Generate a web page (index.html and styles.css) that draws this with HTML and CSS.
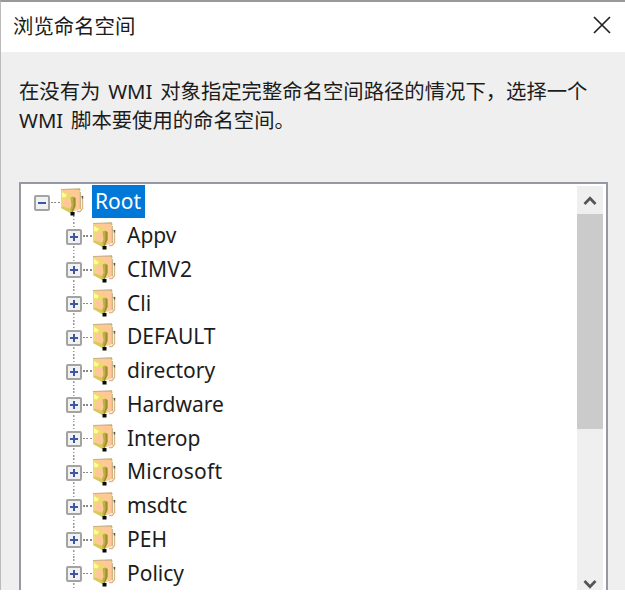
FILE: index.html
```
<!DOCTYPE html>
<html lang="zh-CN">
<head>
<meta charset="utf-8">
<title>浏览命名空间</title>
<link rel="stylesheet" href="styles.css">
</head>
<body>
<svg class="defs" width="0" height="0" aria-hidden="true">
  <symbol id="folder" viewBox="0 0 24 28">
    <path d="M20 8.500h2.500v12l-2.500 3h-3" fill="#fff" stroke="#e0b583" stroke-width="1.400"/>
    <path d="M22.500 8v2.500" stroke="#555" stroke-width="1.300"/>
    <path d="M1 1.500 20 .8 20.500 21 12 24 1 20Z" fill="#ffc996"/>
    <path d="M1 1.500 19.500 .8 20 3M20.300 4v17" fill="none" stroke="#c5b183" stroke-width="1.200"/>
    <path d="M1 2 13 8.500 11 10 4 10.500 1 12Z" fill="#e9df62"/>
    <path d="M2 4 7 7 5 9.500 2 9Z" fill="#fffa9c"/>
    <path d="M1 12 4 10 3 16 1 20Z" fill="#f0dc74"/>
    <path d="M10.500 9.500 13 8.500 15.500 10v8l-3 6.500-3-2 2-5Z" fill="#bdb145"/>
    <path d="M13.500 9 15.500 10v8l-3 6.500-1-.5 2-6Z" fill="#9a8f30"/>
    <path d="M1 20 3 18.500 9.500 20.500 12 25 10 25Z" fill="#d8ca58"/>
    <rect x="10.500" y="24" width="4" height="3.500" fill="#0b0b05"/>
  </symbol>
</svg>
<main class="dialog">
  <header class="titlebar">
    <h1>浏览命名空间</h1>
    <svg class="close" viewBox="0 0 18 18"><path d="M1 1 17 17M17 1 1 17"/></svg>
  </header>
  <p class="message">在没有为 WMI 对象指定完整命名空间路径的情况下，选择一个<br>WMI 脚本要使用的命名空间。</p>
  <section class="tree-box">
    <ul class="tree">
      <li class="root"><i class="box minus"></i><i class="dots"></i><svg class="folder"><use href="#folder"/></svg><span class="label selected">Root</span></li>
      <li><i class="box plus"></i><i class="dots"></i><svg class="folder"><use href="#folder"/></svg><span class="label">Appv</span></li>
      <li><i class="box plus"></i><i class="dots"></i><svg class="folder"><use href="#folder"/></svg><span class="label wide">CIMV2</span></li>
      <li><i class="box plus"></i><i class="dots"></i><svg class="folder"><use href="#folder"/></svg><span class="label">Cli</span></li>
      <li><i class="box plus"></i><i class="dots"></i><svg class="folder"><use href="#folder"/></svg><span class="label">DEFAULT</span></li>
      <li><i class="box plus"></i><i class="dots"></i><svg class="folder"><use href="#folder"/></svg><span class="label">directory</span></li>
      <li><i class="box plus"></i><i class="dots"></i><svg class="folder"><use href="#folder"/></svg><span class="label">Hardware</span></li>
      <li><i class="box plus"></i><i class="dots"></i><svg class="folder"><use href="#folder"/></svg><span class="label">Interop</span></li>
      <li><i class="box plus"></i><i class="dots"></i><svg class="folder"><use href="#folder"/></svg><span class="label wide">Microsoft</span></li>
      <li><i class="box plus"></i><i class="dots"></i><svg class="folder"><use href="#folder"/></svg><span class="label">msdtc</span></li>
      <li><i class="box plus"></i><i class="dots"></i><svg class="folder"><use href="#folder"/></svg><span class="label">PEH</span></li>
      <li><i class="box plus"></i><i class="dots"></i><svg class="folder"><use href="#folder"/></svg><span class="label">Policy</span></li>
    </ul>
    <div class="scrollbar">
      <svg class="arrow" viewBox="0 0 14 11"><path d="M1.500 9 7 3.200 12.500 9"/></svg>
      <div class="thumb"></div>
      <svg class="arrow down" viewBox="0 0 14 11"><path d="M1.500 2 7 7.800 12.500 2"/></svg>
    </div>
  </section>
</main>
</body>
</html>
```
FILE: styles.css
```
* { box-sizing: border-box; }
body {
  margin: 0;
  background: #fff;
  color: #1c1c1c;
  font-family: "Noto Sans", "Noto Sans CJK SC", sans-serif;
  overflow: hidden;
}
.defs { display: block; }
.dialog {
  width: 625px;
  height: 590px;
  background: #efefef;
  border-top: 2px solid #999;
  border-left: 1px solid #bbb;
  overflow: hidden;
}
.titlebar {
  height: 50px;
  padding: 0 14px 0 12px;
  display: flex;
  align-items: center;
  justify-content: space-between;
  background: #fff;
}
h1 {
  margin: -4px 0 0;
  font: 400 20.4px/30px "Noto Sans CJK SC", sans-serif;
}
.close { width: 18px; height: 18px; margin-top: -4px; fill: none; stroke: #222; stroke-width: 1.7; }
.message {
  height: 130px;
  margin: 0;
  padding: 25px 0 0 18px;
  font-size: 20.35px;
  line-height: 29px;
  word-spacing: 2.5px;
  white-space: nowrap;
}
.tree-box {
  width: 589px;
  height: 420px;
  margin-left: 18px;
  padding: 1px 3px 0 0;
  border: 2px solid #9699a3;
  background: #fff;
  display: flex;
  justify-content: space-between;
}
.tree { list-style: none; margin: 0; padding: 0; width: 400px; }
.tree li {
  height: 33.75px;
  padding-left: 45px;
  display: flex;
  align-items: center;
  background: repeating-linear-gradient(#999 0 1.500px, #fff 1.500px 3.400px) 52px 0 / 1.500px 100% no-repeat;
}
.tree .root { padding-left: 13px; background-position: 52px 27px; }
.box {
  flex: none;
  width: 16px;
  height: 16px;
  margin-top: 2px;
  border: 2px solid #a3a3a3;
  border-radius: 2px;
  background:
    linear-gradient(#3d57a5, #3d57a5) center / 8px 2px no-repeat,
    #f1f1f1;
}
.plus {
  background:
    linear-gradient(#3d57a5, #3d57a5) center / 8px 2px no-repeat,
    linear-gradient(#3d57a5, #3d57a5) center / 2px 8px no-repeat,
    #f1f1f1;
}
.dots {
  flex: none;
  width: 9px;
  height: 1.500px;
  margin: 1px 0 0 1px;
  background: repeating-linear-gradient(90deg, #888 0 2px, #fff 2px 3.400px);
}
.folder { flex: none; width: 24px; height: 28px; }
.label {
  margin-left: 8px;
  padding: 0 3px;
  font-size: 21px;
  line-height: 33px;
}
.wide { letter-spacing: .25px; }
.selected { background: #0078d7; color: #fff; padding-right: 4px; }
.scrollbar {
  width: 26px;
  height: 404px;
  margin-top: 1px;
  background: #efefef;
  display: flex;
  flex-direction: column;
  align-items: center;
}
.arrow { flex: none; width: 14px; height: 11px; margin: 9px 0 8px; fill: none; stroke: #555; stroke-width: 2.700; }
.thumb { width: 26px; height: 215px; background: #cbcbcb; }
.down { margin: auto 0 0; }
```
